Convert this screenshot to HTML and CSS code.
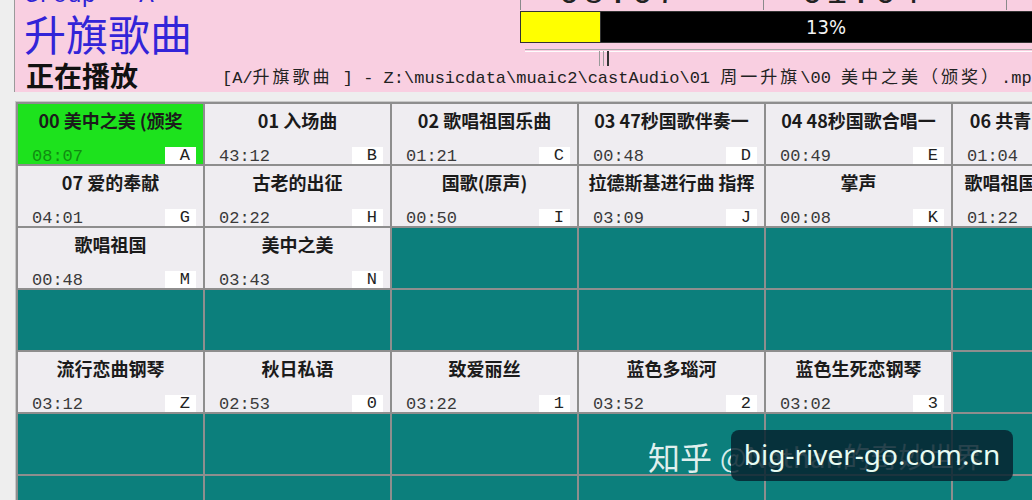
FILE: index.html
```html
<!DOCTYPE html>
<html>
<head>
    <meta charset="utf-8">
    <title>升旗歌曲 - 播放</title>
    <link rel="stylesheet" href="styles.css">
</head>
<body>
    <div class="header">
        <div class="header-top">
            <div class="titles">
                <div class="group">Group - A</div>
                <div class="album">升旗歌曲</div>
            </div>
            <div class="meters">
                <div class="timer">
                    <div class="clock"><span>08:07</span></div>
                    <div class="clock"><span>01:04</span></div>
                    <div class="clock"><span>07:03</span></div>
                </div>
                <div class="progress">
                    <div class="progress-fill" style="width: 13%"></div>
                    <div class="progress-label">13%</div>
                </div>
                <div class="slider">
                    <div class="slider-track"></div>
                    <div class="slider-thumb"><i></i><i></i><i></i></div>
                </div>
            </div>
        </div>
        <div class="now-row">
            <div class="now-label">正在播放</div>
            <div class="path">[A/<span class="cjk">升旗歌曲</span> ] - Z:\musicdata\muaic2\castAudio\01 <span class="cjk">周一升旗</span>\00 <span class="cjk">美中之美（颁奖）</span>.mp3</div>
        </div>
    </div>

    <div class="board">
        <!-- row 1 -->
        <div class="tile playing">
            <div class="tile-title">00 美中之美 (颁奖</div>
            <div class="tile-foot"><span class="tile-time">08:07</span><span class="tile-key">A</span></div>
        </div>
        <div class="tile">
            <div class="tile-title">01 入场曲</div>
            <div class="tile-foot"><span class="tile-time">43:12</span><span class="tile-key">B</span></div>
        </div>
        <div class="tile">
            <div class="tile-title">02 歌唱祖国乐曲</div>
            <div class="tile-foot"><span class="tile-time">01:21</span><span class="tile-key">C</span></div>
        </div>
        <div class="tile">
            <div class="tile-title">03 47秒国歌伴奏一</div>
            <div class="tile-foot"><span class="tile-time">00:48</span><span class="tile-key">D</span></div>
        </div>
        <div class="tile">
            <div class="tile-title">04 48秒国歌合唱一</div>
            <div class="tile-foot"><span class="tile-time">00:49</span><span class="tile-key">E</span></div>
        </div>
        <div class="tile">
            <div class="tile-title">06 共青团员之歌唱</div>
            <div class="tile-foot"><span class="tile-time">01:04</span><span class="tile-key">F</span></div>
        </div>

        <!-- row 2 -->
        <div class="tile">
            <div class="tile-title">07 爱的奉献</div>
            <div class="tile-foot"><span class="tile-time">04:01</span><span class="tile-key">G</span></div>
        </div>
        <div class="tile">
            <div class="tile-title">古老的出征</div>
            <div class="tile-foot"><span class="tile-time">02:22</span><span class="tile-key">H</span></div>
        </div>
        <div class="tile">
            <div class="tile-title">国歌(原声)</div>
            <div class="tile-foot"><span class="tile-time">00:50</span><span class="tile-key">I</span></div>
        </div>
        <div class="tile">
            <div class="tile-title">拉德斯基进行曲 指挥</div>
            <div class="tile-foot"><span class="tile-time">03:09</span><span class="tile-key">J</span></div>
        </div>
        <div class="tile">
            <div class="tile-title">掌声</div>
            <div class="tile-foot"><span class="tile-time">00:08</span><span class="tile-key">K</span></div>
        </div>
        <div class="tile">
            <div class="tile-title">歌唱祖国钢琴伴奏版</div>
            <div class="tile-foot"><span class="tile-time">01:22</span><span class="tile-key">L</span></div>
        </div>

        <!-- row 3 -->
        <div class="tile">
            <div class="tile-title">歌唱祖国</div>
            <div class="tile-foot"><span class="tile-time">00:48</span><span class="tile-key">M</span></div>
        </div>
        <div class="tile">
            <div class="tile-title">美中之美</div>
            <div class="tile-foot"><span class="tile-time">03:43</span><span class="tile-key">N</span></div>
        </div>
        <div class="tile empty"></div>
        <div class="tile empty"></div>
        <div class="tile empty"></div>
        <div class="tile empty"></div>

        <!-- row 4 -->
        <div class="tile empty"></div>
        <div class="tile empty"></div>
        <div class="tile empty"></div>
        <div class="tile empty"></div>
        <div class="tile empty"></div>
        <div class="tile empty"></div>

        <!-- row 5 -->
        <div class="tile">
            <div class="tile-title">流行恋曲钢琴</div>
            <div class="tile-foot"><span class="tile-time">03:12</span><span class="tile-key">Z</span></div>
        </div>
        <div class="tile">
            <div class="tile-title">秋日私语</div>
            <div class="tile-foot"><span class="tile-time">02:53</span><span class="tile-key">0</span></div>
        </div>
        <div class="tile">
            <div class="tile-title">致爱丽丝</div>
            <div class="tile-foot"><span class="tile-time">03:22</span><span class="tile-key">1</span></div>
        </div>
        <div class="tile">
            <div class="tile-title">蓝色多瑙河</div>
            <div class="tile-foot"><span class="tile-time">03:52</span><span class="tile-key">2</span></div>
        </div>
        <div class="tile">
            <div class="tile-title">蓝色生死恋钢琴</div>
            <div class="tile-foot"><span class="tile-time">03:02</span><span class="tile-key">3</span></div>
        </div>
        <div class="tile empty"></div>

        <!-- rows 6-7 -->
        <div class="tile empty"></div>
        <div class="tile empty"></div>
        <div class="tile empty"></div>
        <div class="tile empty"></div>
        <div class="tile empty"></div>
        <div class="tile empty"></div>
        <div class="tile empty"></div>
        <div class="tile empty"></div>
        <div class="tile empty"></div>
        <div class="tile empty"></div>
        <div class="tile empty"></div>
        <div class="tile empty"></div>
    </div>

    <div class="watermark">
        <span class="wm-site">知乎</span><span class="wm-user">@Nathan的奇妙世界</span>
        <div class="wm-box">big-river-go.com.cn</div>
    </div>
</body>
</html>
```

FILE: styles.css
```css
html,
body {
    margin: 0;
    padding: 0;
    height: 100%;
    overflow: hidden;
    background: #eeeeee;
    font-family: "Noto Sans CJK SC", sans-serif;
}
body {
    position: relative;
}

/* header: album name, meters and current file */
.header {
    margin-left: 14px;
    height: 92px;
    background: #f9cfe1;
    border-left: 1px solid #9a9a9a;
    overflow: hidden;
}
.header-top {
    display: flex;
    height: 58px;
}
.titles {
    flex: none;
    width: 496px;
    padding-left: 9px;
}
.group {
    margin-top: -17px;
    font: 24px/25px "Liberation Mono", monospace;
    color: #2f22d6;
}
.album {
    font-size: 42px;
    line-height: 50px;
    color: #3324d8;
}
.meters {
    flex: none;
    width: 612px;
}
.timer {
    display: flex;
    height: 10px;
    overflow: hidden;
    border-left: 1px solid #8a8a8a;
}
.clock {
    flex: none;
    width: 204px;
    border-right: 1px solid #8a8a8a;
    padding-left: 38px;
    font: 34px/34px "Liberation Mono", monospace;
    letter-spacing: 4px;
    color: #222;
}
.clock span {
    display: block;
    margin-top: -23px;
}
.progress {
    position: relative;
    display: flex;
    height: 30px;
    margin-top: 1px;
    border: 1px solid #333;
    background: #000;
}
.progress-fill {
    background: #ffff00;
    border-right: 1px solid #333;
}
.progress-label {
    position: absolute;
    inset: 0;
    text-align: center;
    font: 20px/30px "Liberation Sans Narrow", "DejaVu Sans Condensed", sans-serif;
    color: #f4f4f4;
}
.slider {
    position: relative;
    height: 17px;
}
.slider-track {
    margin: 6px 0 0 5px;
    height: 1px;
    border-top: 1px solid #a8a8a8;
    border-bottom: 1px solid #fdfdfd;
}
.slider-thumb {
    position: absolute;
    left: 79px;
    top: 2px;
    display: flex;
    gap: 3px;
}
.slider-thumb i {
    width: 1px;
    height: 15px;
    background: #9a9a9a;
}
.slider-thumb i:last-child {
    width: 2px;
    background: #333;
}
.now-row {
    display: flex;
    align-items: center;
    height: 34px;
    padding-left: 11px;
    white-space: nowrap;
}
.now-label {
    flex: none;
    width: 196px;
    font-size: 28px;
    font-weight: 700;
    color: #111;
}
.path {
    font: 17px "Liberation Mono", "Noto Sans CJK SC", monospace;
    color: #222;
}
.path .cjk {
    letter-spacing: 3px;
}

/* song board */
.board {
    display: grid;
    grid-template-columns: repeat(6, 185px);
    grid-auto-rows: 60px;
    gap: 2px;
    width: max-content;
    margin: 9px 0 0 15px;
    padding: 2px 0 0 2px;
    border-top: 1px solid #c8c8c8;
    border-left: 1px solid #c8c8c8;
    background: #8e8e8e;
}
.tile {
    display: flex;
    flex-direction: column;
    justify-content: space-between;
    min-width: 0;
    overflow: hidden;
    background: #efedf1;
}
.tile.playing {
    background: #1de21d;
}
.tile.empty {
    background: #0c7f7c;
}
.tile-title {
    padding: 4px 3px 0;
    font-size: 18px;
    font-weight: 700;
    line-height: 24px;
    text-align: center;
    white-space: nowrap;
    overflow: hidden;
    color: #1b1b1b;
}
.tile-foot {
    display: flex;
    align-items: flex-end;
    justify-content: space-between;
    height: 19px;
}
.tile-time {
    padding-left: 14px;
    font: 17px/15px "Liberation Mono", monospace;
    color: #3a3a3a;
}
.playing .tile-time {
    color: #118c11;
}
.tile-key {
    box-sizing: border-box;
    width: 31px;
    height: 17px;
    margin-right: 7px;
    padding-right: 6px;
    background: #fff;
    text-align: right;
    font: 17px/18px "Liberation Mono", monospace;
    color: #222;
}

/* site watermark over the bottom corner */
.watermark {
    position: absolute;
    left: 648px;
    top: 430px;
    height: 51px;
    display: flex;
    align-items: center;
    gap: 8px;
    white-space: nowrap;
    font-size: 32px;
}
.wm-site {
    color: rgba(255, 255, 255, 0.88);
}
.wm-user {
    font-size: 28px;
    color: rgba(255, 255, 255, 0.85);
}
.wm-box {
    position: absolute;
    left: 83px;
    top: 0;
    width: 282px;
    height: 51px;
    border-radius: 8px;
    background: rgba(6, 34, 46, 0.84);
    text-align: center;
    font: 28px/49px "Noto Sans", sans-serif;
    color: #e6fbf2;
}
```
